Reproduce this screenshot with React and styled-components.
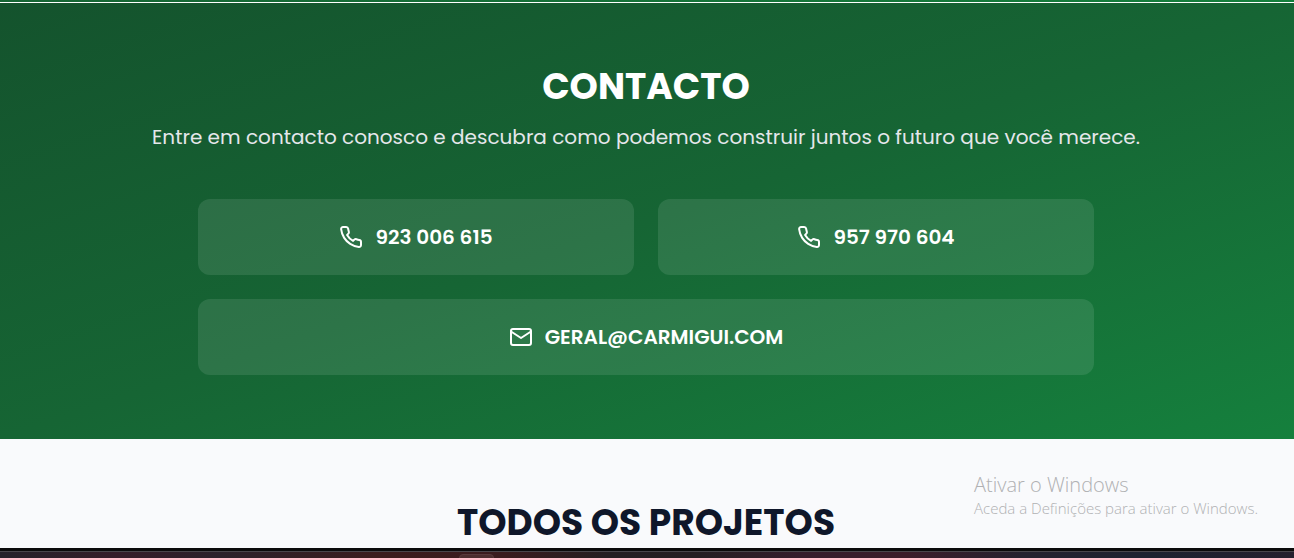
import React from "react";
import styled, { createGlobalStyle } from "styled-components";

const GlobalStyle = createGlobalStyle`
  *, *::before, *::after { box-sizing: border-box; }
  body { margin: 0; font-family: Poppins, Inter, sans-serif; overflow: hidden; }
`;

const Page = styled.div`
  position: relative;
  display: flex;
  flex-direction: column;
`;

const HeroEdge = styled.div`
  height: 2px;
  background: linear-gradient(to right, #166534, #15803d);
`;

const Contact = styled.section`
  border-top: 1px solid #ffffff;
  padding: 64px 18px 64px 16px;
  background: linear-gradient(to bottom right, #14532d, #166534, #15803d) padding-box;
  color: #ffffff;
  text-align: center;
`;

const Title = styled.h2`
  margin: 0;
  font-size: 36px;
  line-height: 40px;
  font-weight: 700;
  color: ${({ $dark }) => ($dark ? "#0f172a" : "#ffffff")};
`;

const Lead = styled.p`
  margin: 16px 0 48px;
  font-size: 20px;
  line-height: 28px;
  color: #e5e7eb;
`;

const Cards = styled.div`
  display: grid;
  grid-template-columns: 1fr 1fr;
  gap: 24px;
  max-width: 896px;
  margin: 0 auto;
`;

const Card = styled.a`
  display: flex;
  align-items: center;
  justify-content: center;
  gap: 12px;
  padding: 24px;
  grid-column: ${({ $wide }) => ($wide ? "1 / -1" : "auto")};
  border-radius: 12px;
  background: rgba(255, 255, 255, 0.1);
  color: #ffffff;
  font-size: 20px;
  line-height: 28px;
  font-weight: 600;
  text-decoration: none;
`;

const Icon = styled.svg`
  width: 24px;
  height: 24px;
  flex: none;
  fill: none;
  stroke: currentColor;
  stroke-width: 2;
  stroke-linecap: round;
  stroke-linejoin: round;
`;

const Projects = styled.section`
  padding: 64px 18px 5px 16px;
  background: #f9fafc;
  text-align: center;
`;

const Taskbar = styled.footer`
  height: 10px;
  padding-left: 459px;
  padding-top: 3px;
  border-top: 3px solid #0b0b0b;
  overflow: hidden;
  box-shadow: inset 0 1px #48464b;
  background: linear-gradient(
    to right,
    #25222a, #351d29 9%, #2b222b 17%, #3b1d1e 29%, #3a1c1e 39%, #241f22 47%,
    #251f23 54%, #351d2c 62%, #3b1d2a 70%, #25222f 79%, #1d2230 89%, #25202e
  );
`;

const TaskItem = styled.div`
  width: 35px;
  height: 8px;
  border: 1px solid #583a3b;
  border-radius: 4px;
  background: #4b2e2f;
`;

const Watermark = styled.aside`
  position: absolute;
  right: 36px;
  bottom: 40px;
  font-family: "Segoe UI", "Open Sans", sans-serif;
  font-size: 15px;
  line-height: 20px;
  font-weight: 300;
  color: #b0b1b3;
`;

const WatermarkTitle = styled.div`
  font-size: 20px;
  line-height: 26px;
`;

function PhoneIcon() {
  return (
    <Icon viewBox="0 0 24 24" aria-hidden="true">
      <path d="M22 16.92v3a2 2 0 0 1-2.18 2 19.79 19.79 0 0 1-8.63-3.07 19.5 19.5 0 0 1-6-6 19.79 19.79 0 0 1-3.07-8.67A2 2 0 0 1 4.11 2h3a2 2 0 0 1 2 1.72 12.84 12.84 0 0 0 .7 2.81 2 2 0 0 1-.45 2.11L8.09 9.91a16 16 0 0 0 6 6l1.27-1.27a2 2 0 0 1 2.11-.45 12.84 12.84 0 0 0 2.81.7A2 2 0 0 1 22 16.92z" />
    </Icon>
  );
}

function MailIcon() {
  return (
    <Icon viewBox="0 0 24 24" aria-hidden="true">
      <rect x="2" y="4" width="20" height="16" rx="2" />
      <path d="M22 6.5l-10 6.5L2 6.5" />
    </Icon>
  );
}

export default function App() {
  return (
    <Page>
      <GlobalStyle />
      <HeroEdge />
      <Contact>
        <Title>CONTACTO</Title>
        <Lead>Entre em contacto conosco e descubra como podemos construir juntos o futuro que você merece.</Lead>
        <Cards>
          <Card href="tel:923006615"><PhoneIcon />923 006 615</Card>
          <Card href="tel:957970604"><PhoneIcon />957 970 604</Card>
          <Card href="mailto:geral@carmigui.com" $wide><MailIcon />GERAL@CARMIGUI.COM</Card>
        </Cards>
      </Contact>
      <Projects>
        <Title $dark>TODOS OS PROJETOS</Title>
      </Projects>
      <Taskbar><TaskItem /></Taskbar>
      <Watermark>
        <WatermarkTitle>Ativar o Windows</WatermarkTitle>
        Aceda a Definições para ativar o Windows.
      </Watermark>
    </Page>
  );
}
